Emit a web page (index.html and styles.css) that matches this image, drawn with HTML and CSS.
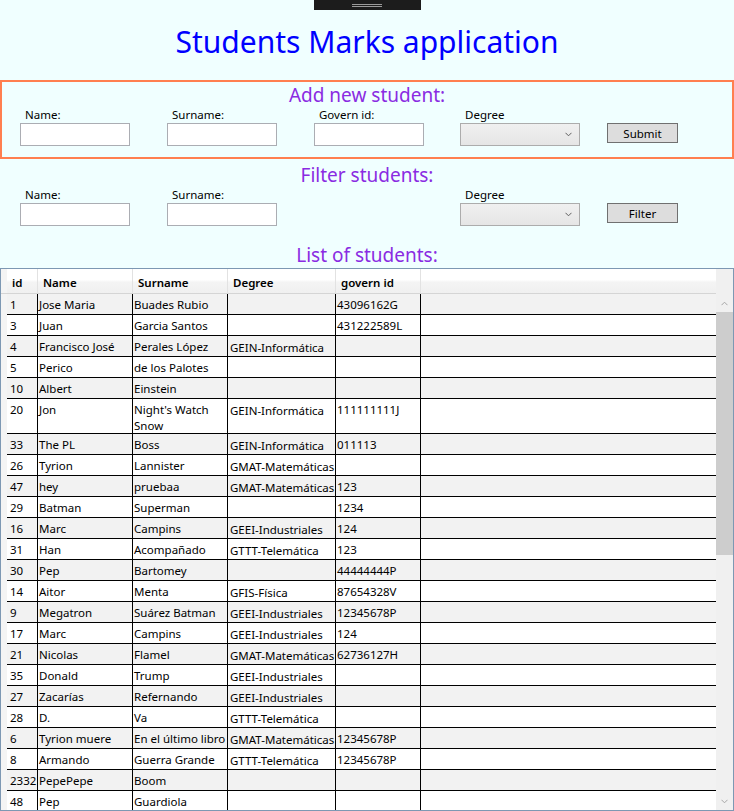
FILE: index.html
```html
<!DOCTYPE html>
<html lang="es">
<head>
<meta charset="utf-8">
<title>Students Marks application</title>
<link rel="stylesheet" href="styles.css">
</head>
<body>
<div class="topbar"><div class="grip"><div class="grip-lines"></div></div></div>
<h1 class="title">Students Marks application</h1>

<section class="add-box">
  <h2 class="section-title">Add new student:</h2>
  <div class="fields">
    <div class="field"><label>Name:</label><div class="textbox"></div></div>
    <div class="field"><label>Surname:</label><div class="textbox"></div></div>
    <div class="field"><label>Govern id:</label><div class="textbox"></div></div>
    <div class="field"><label>Degree</label><div class="combo"><svg width="7" height="5" viewBox="0 0 7 5"><polyline points="0.5,0.8 3.5,3.8 6.5,0.8" fill="none" stroke="#606060" stroke-width="1"/></svg></div></div>
    <div class="field"><button class="btn">Submit</button></div>
  </div>
</section>

<section class="filter-box">
  <h2 class="section-title">Filter students:</h2>
  <div class="fields">
    <div class="field"><label>Name:</label><div class="textbox"></div></div>
    <div class="field"><label>Surname:</label><div class="textbox"></div></div>
    <div class="field"></div>
    <div class="field"><label>Degree</label><div class="combo"><svg width="7" height="5" viewBox="0 0 7 5"><polyline points="0.5,0.8 3.5,3.8 6.5,0.8" fill="none" stroke="#606060" stroke-width="1"/></svg></div></div>
    <div class="field"><button class="btn">Filter</button></div>
  </div>
</section>

<h2 class="section-title list-title">List of students:</h2>

<div class="grid">
  <div class="grid-main">
    <div class="row header">
      <div class="hcell rowhead"></div>
      <div class="hcell">id</div>
      <div class="hcell">Name</div>
      <div class="hcell">Surname</div>
      <div class="hcell">Degree</div>
      <div class="hcell">govern id</div>
      <div class="hcell filler"></div>
    </div>
    <div class="rows">
      <div class="row"><div class="rowhead"></div><div class="cell id">1</div><div class="cell">Jose Maria</div><div class="cell">Buades Rubio</div><div class="cell"></div><div class="cell">43096162G</div><div class="cell filler"></div></div>
      <div class="row"><div class="rowhead"></div><div class="cell id">3</div><div class="cell">Juan</div><div class="cell">Garcia Santos</div><div class="cell"></div><div class="cell">431222589L</div><div class="cell filler"></div></div>
      <div class="row"><div class="rowhead"></div><div class="cell id">4</div><div class="cell">Francisco José</div><div class="cell">Perales López</div><div class="cell deg">GEIN-Informática</div><div class="cell"></div><div class="cell filler"></div></div>
      <div class="row"><div class="rowhead"></div><div class="cell id">5</div><div class="cell">Perico</div><div class="cell">de los Palotes</div><div class="cell"></div><div class="cell"></div><div class="cell filler"></div></div>
      <div class="row"><div class="rowhead"></div><div class="cell id">10</div><div class="cell">Albert</div><div class="cell">Einstein</div><div class="cell"></div><div class="cell"></div><div class="cell filler"></div></div>
      <div class="row"><div class="rowhead"></div><div class="cell id">20</div><div class="cell">Jon</div><div class="cell wrap">Night's Watch Snow</div><div class="cell deg">GEIN-Informática</div><div class="cell">111111111J</div><div class="cell filler"></div></div>
      <div class="row"><div class="rowhead"></div><div class="cell id">33</div><div class="cell">The PL</div><div class="cell">Boss</div><div class="cell deg">GEIN-Informática</div><div class="cell">011113</div><div class="cell filler"></div></div>
      <div class="row"><div class="rowhead"></div><div class="cell id">26</div><div class="cell">Tyrion</div><div class="cell">Lannister</div><div class="cell deg">GMAT-Matemáticas</div><div class="cell"></div><div class="cell filler"></div></div>
      <div class="row"><div class="rowhead"></div><div class="cell id">47</div><div class="cell">hey</div><div class="cell">pruebaa</div><div class="cell deg">GMAT-Matemáticas</div><div class="cell">123</div><div class="cell filler"></div></div>
      <div class="row"><div class="rowhead"></div><div class="cell id">29</div><div class="cell">Batman</div><div class="cell">Superman</div><div class="cell"></div><div class="cell">1234</div><div class="cell filler"></div></div>
      <div class="row"><div class="rowhead"></div><div class="cell id">16</div><div class="cell">Marc</div><div class="cell">Campins</div><div class="cell deg">GEEI-Industriales</div><div class="cell">124</div><div class="cell filler"></div></div>
      <div class="row"><div class="rowhead"></div><div class="cell id">31</div><div class="cell">Han</div><div class="cell">Acompañado</div><div class="cell deg">GTTT-Telemática</div><div class="cell">123</div><div class="cell filler"></div></div>
      <div class="row"><div class="rowhead"></div><div class="cell id">30</div><div class="cell">Pep</div><div class="cell">Bartomey</div><div class="cell"></div><div class="cell">44444444P</div><div class="cell filler"></div></div>
      <div class="row"><div class="rowhead"></div><div class="cell id">14</div><div class="cell">Aitor</div><div class="cell">Menta</div><div class="cell deg">GFIS-Física</div><div class="cell">87654328V</div><div class="cell filler"></div></div>
      <div class="row"><div class="rowhead"></div><div class="cell id">9</div><div class="cell">Megatron</div><div class="cell">Suárez Batman</div><div class="cell deg">GEEI-Industriales</div><div class="cell">12345678P</div><div class="cell filler"></div></div>
      <div class="row"><div class="rowhead"></div><div class="cell id">17</div><div class="cell">Marc</div><div class="cell">Campins</div><div class="cell deg">GEEI-Industriales</div><div class="cell">124</div><div class="cell filler"></div></div>
      <div class="row"><div class="rowhead"></div><div class="cell id">21</div><div class="cell">Nicolas</div><div class="cell">Flamel</div><div class="cell deg">GMAT-Matemáticas</div><div class="cell">62736127H</div><div class="cell filler"></div></div>
      <div class="row"><div class="rowhead"></div><div class="cell id">35</div><div class="cell">Donald</div><div class="cell">Trump</div><div class="cell deg">GEEI-Industriales</div><div class="cell"></div><div class="cell filler"></div></div>
      <div class="row"><div class="rowhead"></div><div class="cell id">27</div><div class="cell">Zacarías</div><div class="cell">Refernando</div><div class="cell deg">GEEI-Industriales</div><div class="cell"></div><div class="cell filler"></div></div>
      <div class="row"><div class="rowhead"></div><div class="cell id">28</div><div class="cell">D.</div><div class="cell">Va</div><div class="cell deg">GTTT-Telemática</div><div class="cell"></div><div class="cell filler"></div></div>
      <div class="row"><div class="rowhead"></div><div class="cell id">6</div><div class="cell">Tyrion muere</div><div class="cell">En el último libro</div><div class="cell deg">GMAT-Matemáticas</div><div class="cell">12345678P</div><div class="cell filler"></div></div>
      <div class="row"><div class="rowhead"></div><div class="cell id">8</div><div class="cell">Armando</div><div class="cell">Guerra Grande</div><div class="cell deg">GTTT-Telemática</div><div class="cell">12345678P</div><div class="cell filler"></div></div>
      <div class="row"><div class="rowhead"></div><div class="cell id">2332</div><div class="cell">PepePepe</div><div class="cell">Boom</div><div class="cell"></div><div class="cell"></div><div class="cell filler"></div></div>
      <div class="row"><div class="rowhead"></div><div class="cell id">48</div><div class="cell">Pep</div><div class="cell">Guardiola</div><div class="cell"></div><div class="cell"></div><div class="cell filler"></div></div>
    </div>
  </div>
  <div class="scrollbar">
    <div class="sb-corner"></div>
    <div class="sb-btn"><svg width="7" height="5" viewBox="0 0 7 5"><polyline points="0.5,4.2 3.5,1.2 6.5,4.2" fill="none" stroke="#a6a6a6" stroke-width="1"/></svg></div>
    <div class="sb-thumb"></div>
    <div class="sb-track"></div>
    <div class="sb-btn"><svg width="7" height="5" viewBox="0 0 7 5"><polyline points="0.5,0.8 3.5,3.8 6.5,0.8" fill="none" stroke="#a6a6a6" stroke-width="1"/></svg></div>
  </div>
</div>
</body>
</html>
```

FILE: styles.css
```css
* { box-sizing: border-box; }

html, body {
  margin: 0;
  height: 100%;
  overflow: hidden;
}

body {
  background: #F0FFFF;
  font-family: "Noto Sans", "Open Sans", sans-serif;
  font-size: 11.5px;
  color: #000;
}

.topbar {
  height: 10px;
  display: flex;
  justify-content: center;
}

.grip {
  width: 107px;
  height: 10px;
  background: #1c1c1c;
  display: flex;
  justify-content: center;
}

.grip-lines {
  width: 30px;
  height: 3px;
  margin-top: 4px;
  border-top: 1px solid #9a9a9a;
  border-bottom: 1px solid #9a9a9a;
}

.title {
  margin: 0;
  height: 70px;
  line-height: 64px;
  font-size: 30px;
  font-weight: normal;
  color: #0000FF;
  text-align: center;
}

.add-box {
  height: 79px;
  border: 2px solid #FF7F50;
}

.section-title {
  margin: 1px 0 0;
  height: 24px;
  line-height: 24px;
  font-size: 19px;
  font-weight: normal;
  color: #8A2BE2;
  text-align: center;
}

.fields {
  display: grid;
  grid-template-columns: 147px 147px 146px 147px 71px;
  padding-left: 18px;
}

.filter-box {
  padding-top: 3px;
}

.filter-box .fields {
  padding-left: 20px;
}

.field label {
  display: block;
  height: 16px;
  line-height: 16px;
  padding-left: 5px;
}

.textbox {
  width: 110px;
  height: 23px;
  background: #fff;
  border: 1px solid #abadb3;
}

.combo {
  width: 120px;
  height: 23px;
  border: 1px solid #acacac;
  background: linear-gradient(#f0f0f0, #e5e5e5);
  display: flex;
  align-items: center;
  justify-content: flex-end;
  padding-right: 7px;
}

.btn {
  display: block;
  width: 71px;
  height: 20px;
  margin-top: 16px;
  padding: 0;
  border: 1px solid #707070;
  background: #dddddd;
  font-family: "Noto Sans", "Open Sans", sans-serif;
  font-size: 11.5px;
  color: #000;
}

.list-title {
  margin-top: 17px;
}

.grid {
  margin-top: 1px;
  height: 543px;
  border: 1px solid #7d98b3;
  background: #fff;
  display: flex;
}

.grid-main {
  flex: 1;
  overflow: hidden;
}

.row {
  display: grid;
  grid-template-columns: 6px 31px 95px 95px 108px 85px 1fr;
}

.hcell {
  height: 25px;
  padding-top: 3px;
  line-height: 21px;
  padding-left: 5px;
  font-weight: 600;
  border-right: 1px solid #e2e2e2;
  border-bottom: 1px solid #d5d5d5;
  background: linear-gradient(#ffffff 0%, #ffffff 45%, #f4f4f4 55%, #f0f0f0 100%);
  white-space: nowrap;
  overflow: hidden;
}

.hcell.rowhead {
  padding: 0;
  border-right: none;
}

.hcell.filler {
  border-right: none;
}

.rows .row:nth-child(odd) {
  background: #f2f2f2;
}

.rowhead {
  background: #f4f4f4;
}

.cell {
  padding: 3px 1px 1px 1px;
  line-height: 16px;
  border-right: 1px solid #000;
  border-bottom: 1px solid #000;
  white-space: nowrap;
  overflow: hidden;
}

.cell.id {
  padding-left: 3px;
  text-overflow: clip;
}

.cell.deg {
  padding-top: 4px;
  padding-bottom: 0;
  padding-left: 2px;
}

.cell.wrap {
  white-space: normal;
  line-height: 15.5px;
  padding-bottom: 0;
}

.cell.filler {
  border-right: none;
}

.scrollbar {
  width: 17px;
  background: #f0f0f0;
  display: flex;
  flex-direction: column;
}

.sb-corner {
  height: 26px;
}

.sb-btn {
  height: 17px;
  display: flex;
  align-items: center;
  justify-content: center;
}

.sb-thumb {
  height: 243px;
  background: #cdcdcd;
}

.sb-track {
  flex: 1;
}
```
